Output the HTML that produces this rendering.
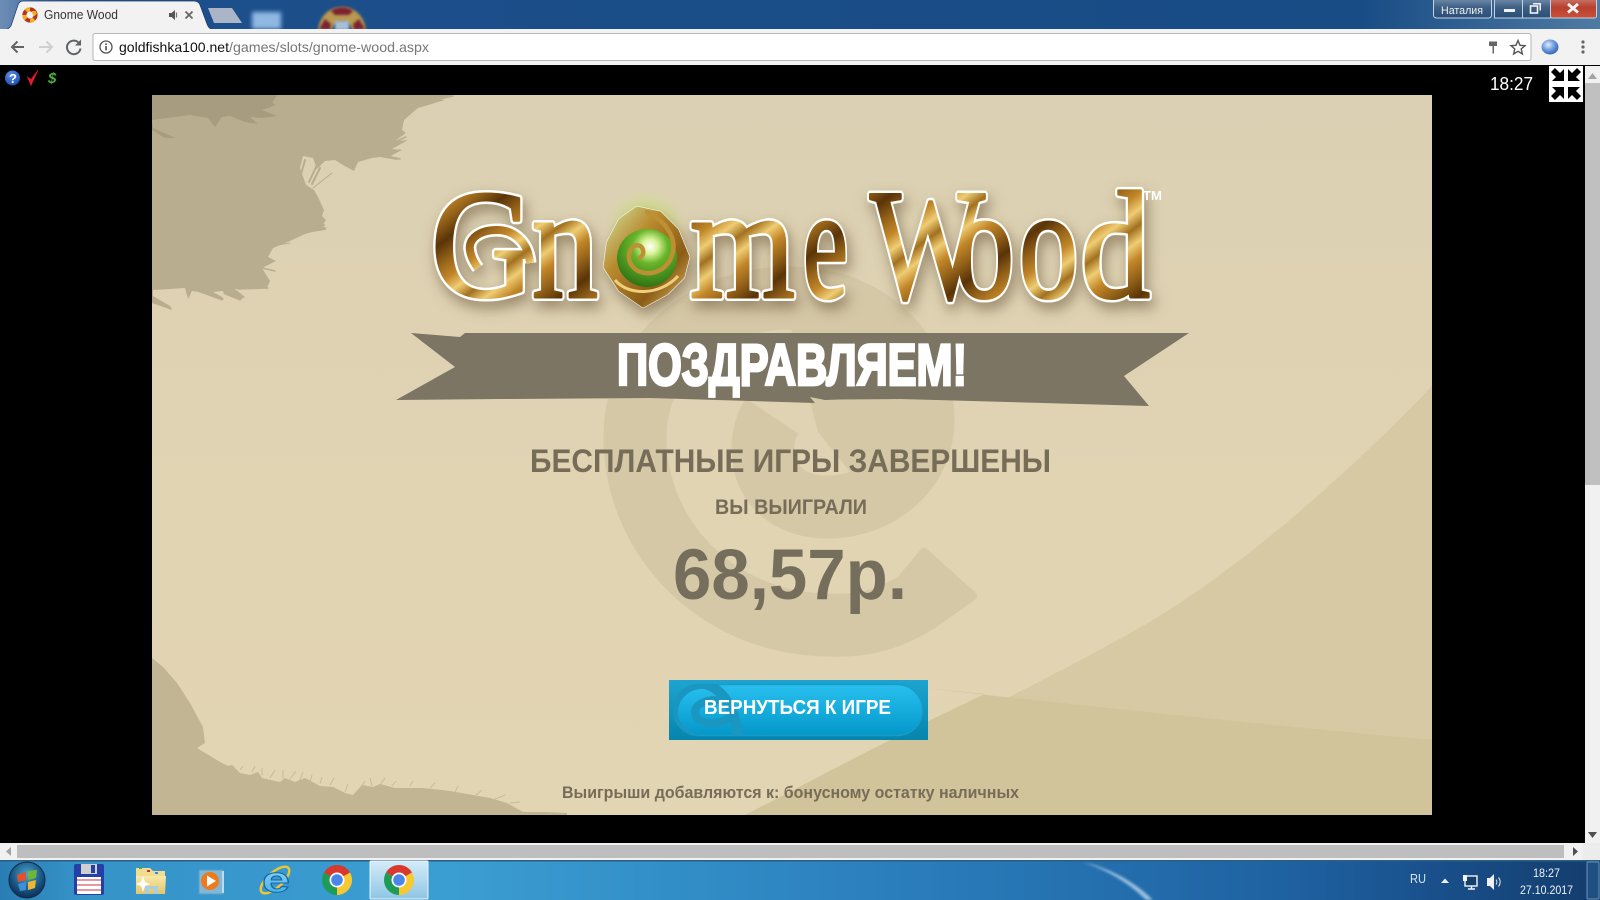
<!DOCTYPE html>
<html lang="ru">
<head>
<meta charset="utf-8">
<title>Gnome Wood</title>
<style>
html,body{margin:0;padding:0;background:#000;width:1600px;height:900px;overflow:hidden}
svg{display:block}
text{font-family:"Liberation Sans",Arial,sans-serif}
.serif{font-family:"Liberation Serif",serif;font-weight:400}
.b{font-weight:700}
</style>
</head>
<body>
<svg width="1600" height="900" viewBox="0 0 1600 900" xmlns="http://www.w3.org/2000/svg">
<defs>
<linearGradient id="panel" x1="0" y1="0" x2="0" y2="1"><stop offset="0" stop-color="#dbd0b3"/><stop offset=".6" stop-color="#e1d4b3"/><stop offset="1" stop-color="#e2d5b3"/></linearGradient>
<linearGradient id="title" x1="0" y1="0" x2="1" y2="0"><stop offset="0" stop-color="#6d8db5"/><stop offset=".04" stop-color="#2b5c96"/><stop offset=".12" stop-color="#1c4f8b"/><stop offset=".85" stop-color="#184c85"/><stop offset="1" stop-color="#4f7aa3"/></linearGradient>
<linearGradient id="task" x1="0" y1="0" x2="1" y2="0"><stop offset="0" stop-color="#2a7db5"/><stop offset=".05" stop-color="#3593c8"/><stop offset=".28" stop-color="#3b9ed2"/><stop offset=".55" stop-color="#2b7fbd"/><stop offset=".8" stop-color="#1f62a2"/><stop offset=".88" stop-color="#1a5390"/><stop offset="1" stop-color="#133c6c"/></linearGradient>
<linearGradient id="gold" gradientUnits="userSpaceOnUse" x1="0" y1="0" x2="34" y2="46" spreadMethod="reflect"><stop offset="0" stop-color="#5a3408"/><stop offset=".3" stop-color="#96641a"/><stop offset=".55" stop-color="#c18628"/><stop offset=".78" stop-color="#efcd74"/><stop offset="1" stop-color="#a2701f"/></linearGradient>
<radialGradient id="gem" cx=".55" cy=".3" r=".7"><stop offset="0" stop-color="#ffffff"/><stop offset=".18" stop-color="#d9f49a"/><stop offset=".42" stop-color="#69b52a"/><stop offset="1" stop-color="#2f7415"/></radialGradient>
<linearGradient id="gemo" x1="0" y1="0" x2="1" y2="1"><stop offset="0" stop-color="#cfe2a0"/><stop offset=".35" stop-color="#b98a2e"/><stop offset=".7" stop-color="#8a5c16"/><stop offset="1" stop-color="#e7c067"/></linearGradient>
<radialGradient id="glow" cx=".5" cy=".5" r=".5"><stop offset="0" stop-color="#bff05a" stop-opacity=".75"/><stop offset="1" stop-color="#bff05a" stop-opacity="0"/></radialGradient>
<linearGradient id="btn" x1="0" y1="0" x2="0" y2="1"><stop offset="0" stop-color="#29c0f0"/><stop offset="1" stop-color="#0398c9"/></linearGradient>
<linearGradient id="btno" x1="0" y1="0" x2="0" y2="1"><stop offset="0" stop-color="#1ea4d0"/><stop offset="1" stop-color="#0685ad"/></linearGradient>
<linearGradient id="btnmax" x1="0" y1="0" x2="0" y2="1"><stop offset="0" stop-color="#7b95b2"/><stop offset=".5" stop-color="#3e5f85"/><stop offset="1" stop-color="#2a4e77"/></linearGradient>
<linearGradient id="btnclose" x1="0" y1="0" x2="0" y2="1"><stop offset="0" stop-color="#c98074"/><stop offset=".5" stop-color="#b8402f"/><stop offset="1" stop-color="#c9503a"/></linearGradient>
<radialGradient id="orb" cx=".5" cy=".35" r=".65"><stop offset="0" stop-color="#4ba6d2"/><stop offset=".7" stop-color="#164f7c"/><stop offset="1" stop-color="#0c2f4e"/></radialGradient>
<linearGradient id="active" x1="0" y1="0" x2="0" y2="1"><stop offset="0" stop-color="#d4ecf8"/><stop offset="1" stop-color="#8ec6e4"/></linearGradient>
<linearGradient id="folder" x1="0" y1="0" x2="0" y2="1"><stop offset="0" stop-color="#f8e9a8"/><stop offset="1" stop-color="#e3c469"/></linearGradient>
<linearGradient id="iee" x1="0" y1="0" x2="0" y2="1"><stop offset="0" stop-color="#a5e2f8"/><stop offset="1" stop-color="#35a6e6"/></linearGradient>
<radialGradient id="globe" cx=".4" cy=".35" r=".7"><stop offset="0" stop-color="#e4eefa"/><stop offset=".5" stop-color="#6f9de0"/><stop offset="1" stop-color="#2f5eb0"/></radialGradient>
<radialGradient id="qm" cx=".4" cy=".3" r=".75"><stop offset="0" stop-color="#5d92e8"/><stop offset="1" stop-color="#1b48ad"/></radialGradient>
<filter id="shadow" x="-20%" y="-20%" width="140%" height="150%"><feDropShadow dx="3" dy="7" stdDeviation="7" flood-color="#5b4a26" flood-opacity=".55"/></filter>
<filter id="bl" x="-30%" y="-30%" width="160%" height="160%"><feGaussianBlur stdDeviation="1.4"/></filter>
<filter id="bl2" x="-30%" y="-30%" width="160%" height="160%"><feGaussianBlur stdDeviation="2.2"/></filter>
<clipPath id="panelclip"><rect x="152" y="95" width="1280" height="720"/></clipPath>
<clipPath id="pill"><rect x="673" y="684" width="250" height="52" rx="26"/></clipPath>
</defs>

<rect width="1600" height="900" fill="#000"/>

<!-- window title area -->
<rect width="1600" height="30" fill="url(#title)"/>
<polygon points="208,8 232,8 242,23 214,23" fill="#aab6c7"/>
<rect x="252" y="12" width="29" height="17" fill="#8fb8e2" filter="url(#bl2)"/>
<path d="M318 30C320 15 330 7 342 7C354 7 364 15 366 30H352C351 25 348 22 342 22C336 22 333 25 332 30Z" fill="#b89a50" filter="url(#bl)"/>
<path d="M331 11C336 6 348 6 353 11L349 15H335Z" fill="#7a2030" filter="url(#bl)"/>
<path d="M319 29L325 19L331 24L330 30Z M365 29L359 19L353 24L354 30Z" fill="#7a2030" filter="url(#bl)"/>
<rect x="335" y="21" width="14" height="9" fill="#a9bfd8" filter="url(#bl)"/>

<!-- tab -->
<path d="M5 30C9 29 11 27 12 23L18 5C19 2 21 1 23 1H194C197 1 199 2 200 5L207 24C208 27 210 29 213 30Z" fill="#f2f2f2" stroke="#1a3a66" stroke-width=".7"/>
<g fill="none" stroke-width="4">
<circle cx="30" cy="15" r="5.6" stroke="#b43324"/>
<path d="M26 11A5.6 5.6 0 0 1 30 9.4" stroke="#f0b020"/>
<path d="M34 19A5.6 5.6 0 0 1 30 20.6" stroke="#f0b020"/>
<path d="M26 19A5.6 5.6 0 0 1 24.4 15" stroke="#f0b020"/>
<path d="M35.6 15A5.6 5.6 0 0 1 34 11" stroke="#f0b020"/>
</g>
<text x="44" y="19" font-size="12.5" fill="#333" textLength="74" lengthAdjust="spacingAndGlyphs">Gnome Wood</text>
<path d="M169 13H171.5L175 10V20L171.5 17H169Z" fill="#555"/>
<path d="M176.5 12.5V17.5" stroke="#777" stroke-width="1.2"/>
<path d="M185.5 11.5L192.5 18.5M192.5 11.5L185.5 18.5" stroke="#666" stroke-width="1.8"/>

<!-- window buttons -->
<rect x="1433.5" y="-3" width="58" height="21" rx="3" fill="url(#btnmax)" stroke="#c4d2e2" stroke-width="1"/>
<text x="1441" y="14" font-size="11" fill="#f0f0f0" textLength="42" lengthAdjust="spacingAndGlyphs">Наталия</text>
<rect x="1494.5" y="-3" width="28" height="21" fill="url(#btnmax)" stroke="#c4d2e2" stroke-width="1"/>
<rect x="1522.5" y="-3" width="28" height="21" fill="url(#btnmax)" stroke="#c4d2e2" stroke-width="1"/>
<rect x="1550.5" y="-3" width="46" height="21" rx="2" fill="url(#btnclose)" stroke="#c4d2e2" stroke-width="1"/>
<rect x="1504" y="9" width="11" height="3" fill="#f2f2f2"/>
<rect x="1530.5" y="6" width="7" height="7" fill="none" stroke="#f2f2f2" stroke-width="1.6"/>
<path d="M1533 3.800H1540.200V10.500" fill="none" stroke="#f2f2f2" stroke-width="1.5"/>
<path d="M1568 4L1578 12.500M1578 4L1568 12.500" stroke="#f5f5f5" stroke-width="2.8"/>

<!-- toolbar -->
<rect y="29" width="1600" height="36" fill="#f2f2f2"/>
<path d="M12 47H24M17.5 41.5L12 47L17.5 52.5" fill="none" stroke="#5f6368" stroke-width="2"/>
<path d="M39 47H52M46.5 41.5L52 47L46.5 52.5" fill="none" stroke="#cfcfcf" stroke-width="2"/>
<path d="M79 43A6.8 6.8 0 1 0 80.5 48.5" fill="none" stroke="#5f6368" stroke-width="2"/>
<path d="M81 39.5V45.5H75Z" fill="#5f6368"/>
<rect x="93" y="33.5" width="1438" height="27" rx="2" fill="#fff" stroke="#b5b5b5"/>
<circle cx="106" cy="47" r="6" fill="none" stroke="#555" stroke-width="1.3"/>
<rect x="105.2" y="46" width="1.7" height="4.3" fill="#555"/>
<rect x="105.2" y="43.4" width="1.7" height="1.6" fill="#555"/>
<text x="119" y="52" font-size="14" fill="#111" textLength="110" lengthAdjust="spacingAndGlyphs">goldfishka100.net</text>
<text x="229" y="52" font-size="14" fill="#777" textLength="200" lengthAdjust="spacingAndGlyphs">/games/slots/gnome-wood.aspx</text>
<path d="M1489 41.500H1497V46H1494V53.500H1492.500V46H1489Z" fill="#666"/>
<path d="M1518 40.5L1520 45.3L1525 45.7L1521.2 49L1522.4 54L1518 51.3L1513.6 54L1514.8 49L1511 45.7L1516 45.3Z" fill="none" stroke="#555" stroke-width="1.4"/>
<ellipse cx="1550" cy="47" rx="8.5" ry="7.5" fill="url(#globe)"/>
<circle cx="1583" cy="42" r="1.6" fill="#666"/><circle cx="1583" cy="47" r="1.6" fill="#666"/><circle cx="1583" cy="52" r="1.6" fill="#666"/>

<!-- small icons -->
<circle cx="12.5" cy="78" r="7.5" fill="url(#qm)"/>
<text x="9" y="83" font-size="13" class="b" fill="#fff">?</text>
<path d="M27.5 77L31 85.500L38 70L31 79.500Z" fill="#e41b2d" stroke="#e41b2d" stroke-width=".6"/>
<text x="48" y="83" font-size="15" class="b" font-style="italic" fill="#4cb33a">$</text>
<text x="1490" y="90" font-size="18.5" fill="#fff" textLength="43" lengthAdjust="spacingAndGlyphs">18:27</text>
<rect x="1549" y="66" width="34" height="36" fill="#fff"/>
<g fill="#000">
<path d="M1564 69V81H1552L1556 77L1551 72L1555 68L1560 73Z"/>
<path d="M1568 69V81H1580L1576 77L1581 72L1577 68L1572 73Z"/>
<path d="M1564 99V87H1552L1556 91L1551 96L1555 100L1560 95Z"/>
<path d="M1568 99V87H1580L1576 91L1581 96L1577 100L1572 95Z"/>
</g>

<!-- panel -->
<g clip-path="url(#panelclip)">
<rect x="152" y="95" width="1280" height="720" fill="url(#panel)"/>
<g fill="#d5c8a7">
<path d="M929 594C900 615 870 627 830 625C720 625 635 540 635 437C635 360 700 298 790 298C870 298 923 355 923 420C923 470 880 507 827 507C785 507 763 480 763 450C763 435 766 425 772 416" fill="none" stroke="#d5c8a7" stroke-width="63" stroke-linejoin="round"/>
<path d="M924 551L974 596L932 626L888 594Z" stroke="#d5c8a7" stroke-width="7" stroke-linejoin="round"/>
<path d="M818 432L790 325H895V480L850 472Z"/>
</g>
<path d="M1432 386C1360 462 1245 567 1141 627C1038 685 887 760 745 815H1432Z" fill="#d6c9a3"/>
<path d="M925 688C1100 708 1300 728 1432 740V815H745C810 782 870 748 985 694Z" fill="#d1c39a"/>

<!-- bushes -->
<path d="M152 95H453L436 99L445 100L418 108L404 120L402 130L406 133L395 141L408 140L392 149L402 150L390 156L400 158L397 160L380 157L372 158L358 162L354 171L343 165L335 160L325 161L317 169L313 158L303 156L300 168L306 185L314 190L318 197L324 210L322 216L326 220L322 226L327 228L305 234L290 241L273 248L268 257L276 261L262 268L270 281L267 288L248 288L235 289L245 297L240 300L222 291L213 292L224 298L205 293L192 291L188 299L185 288L170 289L153 290V296L170 306L172 310L152 303Z" fill="#b9ad8f"/>
<g stroke="#b9ad8f" fill="none" stroke-linecap="round">
<path d="M313 188L332 173" stroke-width="1"/>
<path d="M305 160L300 178M318 163L309 182M320 168L312 184" stroke-width="2"/>
<path d="M318 226L324 221M296 236L324 225M305 232L325 229" stroke-width="2"/>
<path d="M272 246L290 243" stroke-width="1"/>
<path d="M238 289L268 288M262 268L275 271" stroke-width="1.5"/>
<path d="M380 156L400 159M392 143L406 137M400 150L391 155" stroke-width="1.5"/>
<path d="M430 101L453 96" stroke-width="1.5"/>
<path d="M200 291L222 299M225 293L240 299" stroke-width="3"/>
</g>
<path d="M152 95H277L272 103L276 105L262 110L277 116L262 118L250 117L258 124L245 122L230 116L222 117L215 127L208 118L190 115L175 117L152 120L153 128L175 138L165 138L152 130Z" fill="#a79c7f"/>
<path d="M152 658L163 667L177 683L190 703L203 727L205 743L197 748L220 762L228 766L232 765L240 773L250 775L258 772L262 778L280 782L285 778L295 782L305 778L320 786L333 787L345 793L353 795L362 785L373 787L380 784L395 788L423 788L450 791L473 795L490 798L507 803L523 812L545 812L567 813V815H152Z" fill="#c1b594"/>
<g stroke="#c1b594" stroke-width="1" fill="none" opacity=".8">
<path d="M232 766V768M240 770L243 766M252 772L255 766M262 775L262 768M270 778L275 770M283 779L283 770M290 779L296 771M300 780L303 772M310 782L312 775M320 784L322 777M330 785L334 778M345 792L348 784M360 790L365 781M372 786L370 778M380 785L385 778M392 786L396 781M410 786L413 781M430 788L435 783M455 792L458 786M476 795L482 790M495 799L505 795M510 803L520 802"/>
</g>
</g>

<!-- logo -->
<ellipse cx="646" cy="226" rx="40" ry="36" fill="url(#glow)"/>
<g filter="url(#shadow)" stroke="#fff" stroke-width="8" stroke-linejoin="round" fill="#fff">
<text class="serif" x="431" y="296" font-size="154" textLength="104" lengthAdjust="spacingAndGlyphs">G</text>
<text class="serif" x="532" y="297" font-size="159" textLength="66" lengthAdjust="spacingAndGlyphs">n</text>
<text class="serif" x="690" y="297" font-size="159" textLength="105" lengthAdjust="spacingAndGlyphs">m</text>
<text class="serif" x="803" y="297" font-size="159" textLength="45" lengthAdjust="spacingAndGlyphs">e</text>
<text class="serif" x="870" y="298" font-size="158" textLength="115" lengthAdjust="spacingAndGlyphs">W</text>
<text class="serif" x="955" y="297" font-size="159" textLength="59" lengthAdjust="spacingAndGlyphs">o</text>
<text class="serif" x="1019" y="297" font-size="159" textLength="59" lengthAdjust="spacingAndGlyphs">o</text>
<text class="serif" x="1081" y="297" font-size="153" textLength="69" lengthAdjust="spacingAndGlyphs">d</text>
<path d="M530 263C528 240 512 230 497 230C478 230 468 240 470 250C471 258 475 264 478 268" fill="none" stroke-width="13"/>
<path d="M637 208L660 213L677 230L688 257L683 277L667 293L643 306L620 290L605 267L608 243L620 220Z" stroke-width="4"/>
</g>
<g stroke="url(#gold)" stroke-width="3" stroke-linejoin="round" fill="url(#gold)">
<text class="serif" x="431" y="296" font-size="154" textLength="104" lengthAdjust="spacingAndGlyphs">G</text>
<text class="serif" x="532" y="297" font-size="159" textLength="66" lengthAdjust="spacingAndGlyphs">n</text>
<text class="serif" x="690" y="297" font-size="159" textLength="105" lengthAdjust="spacingAndGlyphs">m</text>
<text class="serif" x="803" y="297" font-size="159" textLength="45" lengthAdjust="spacingAndGlyphs">e</text>
<text class="serif" x="870" y="298" font-size="158" textLength="115" lengthAdjust="spacingAndGlyphs">W</text>
<text class="serif" x="955" y="297" font-size="159" textLength="59" lengthAdjust="spacingAndGlyphs">o</text>
<text class="serif" x="1019" y="297" font-size="159" textLength="59" lengthAdjust="spacingAndGlyphs">o</text>
<text class="serif" x="1081" y="297" font-size="153" textLength="69" lengthAdjust="spacingAndGlyphs">d</text>
<path d="M530 263C528 240 512 230 497 230C478 230 468 240 470 250C471 258 475 264 478 268" fill="none" stroke-width="8"/>
</g>
<path d="M637 208L660 213L677 230L688 257L683 277L667 293L643 306L620 290L605 267L608 243L620 220Z" fill="url(#gemo)" stroke="url(#gemo)" stroke-width="3" stroke-linejoin="round"/>
<ellipse cx="647" cy="258" rx="30" ry="29" fill="url(#gem)"/>
<path d="M647 212C664 220 676 236 673 251C670 268 656 274 646 273C634 272 626 262 630 251C633 244 641 243 643 250C644 254 642 256 640 258" fill="none" stroke="#bd9034" stroke-width="4.5" stroke-linecap="round"/>
<path d="M615 280C628 296 660 296 678 276" fill="none" stroke="#f0cf7a" stroke-width="3"/>
<text x="1143" y="200" font-size="13" class="b" fill="#fff" textLength="19" lengthAdjust="spacingAndGlyphs">TM</text>

<!-- ribbon -->
<path d="M411 333L460 337L465 333L1189 333L1124 376L1149 406L900 399L840 399.500L825 400L810 397L815 403L650 398L500 399L396 400L455 367Z" fill="#7c7564"/>
<text x="617" y="385" font-size="58" class="b" fill="#fff" stroke="#fff" stroke-width="2.8" stroke-linejoin="miter" textLength="350" lengthAdjust="spacingAndGlyphs">ПОЗДРАВЛЯЕМ!</text>

<!-- texts -->
<text x="530" y="472" font-size="32" class="b" fill="#766c58" textLength="521" lengthAdjust="spacingAndGlyphs">БЕСПЛАТНЫЕ ИГРЫ ЗАВЕРШЕНЫ</text>
<text x="715" y="514" font-size="21" class="b" fill="#766c58" textLength="152" lengthAdjust="spacingAndGlyphs">ВЫ ВЫИГРАЛИ</text>
<text x="673" y="599" font-size="71" class="b" fill="#766e5c" textLength="234" lengthAdjust="spacingAndGlyphs">68,57р.</text>

<!-- button -->
<rect x="669" y="680" width="259" height="60" fill="url(#btno)"/>
<rect x="673.5" y="684.5" width="249" height="51" rx="25.5" fill="url(#btn)" stroke="#1b9cc6" stroke-width="1.5"/>
<g clip-path="url(#pill)" fill="none" stroke="#1a97c0">
<path d="M738 738C735 700 715 684 702 684C685 684 673 698 673 712C673 728 690 742 710 742" stroke-width="10"/>
<path d="M722 701C708 698 695 704 695 712C695 722 712 728 730 718" stroke-width="8"/>
</g>
<text x="704" y="714" font-size="20" class="b" fill="#fff" textLength="187" lengthAdjust="spacingAndGlyphs">ВЕРНУТЬСЯ К ИГРЕ</text>

<text x="562" y="798" font-size="16.5" class="b" fill="#776c57" textLength="457" lengthAdjust="spacingAndGlyphs">Выигрыши добавляются к: бонусному остатку наличных</text>

<!-- scrollbars -->
<rect x="1585" y="66" width="15" height="777" fill="#f1f1f1"/>
<path d="M1588 79L1592.5 73L1597 79Z" fill="#a3a3a3"/>
<rect x="1585" y="83" width="15" height="402" fill="#c0c0c0"/>
<path d="M1588 832H1597L1592.5 838Z" fill="#505050"/>
<rect y="843" width="1600" height="17" fill="#f1f1f1"/>
<rect x="17" y="845" width="1547" height="13" fill="#bebebe"/>
<path d="M11 847V856L6 851.5Z" fill="#a3a3a3"/>
<path d="M1573 847V856L1578 851.5Z" fill="#505050"/>
<rect x="1583" y="843" width="17" height="17" fill="#ececec"/>

<!-- taskbar -->
<rect y="860" width="1600" height="40" fill="url(#task)"/>
<rect y="860" width="1600" height="1.5" fill="#2a5f82"/>
<path d="M1082 862C1110 868 1135 882 1153 900H1146C1130 884 1108 870 1082 862Z" fill="#bfdcf0" opacity=".75" filter="url(#bl)"/>
<rect x="1587" y="862" width="12" height="37" rx="1" fill="#1d4f80" stroke="#6f93b3"/>

<!-- start orb -->
<circle cx="27" cy="880" r="18" fill="url(#orb)" stroke="#0f2c46" stroke-width="1"/>
<path d="M17 875L26 872L26 880L18 882Z" fill="#e5502c"/>
<path d="M28 871L37 870L36 878L28 880Z" fill="#6fb53a"/>
<path d="M18 884L26 882L26 890L20 891Z" fill="#3d8fd8"/>
<path d="M28 882L36 880L35 888L28 890Z" fill="#f0b72c"/>
<!-- floppy -->
<rect x="74" y="864" width="30" height="31" rx="2" fill="#2440a8"/>
<rect x="81" y="864" width="16" height="10" fill="#cfcfcf"/>
<rect x="91" y="865" width="4" height="8" fill="#2440a8"/>
<rect x="77" y="877" width="24" height="17" fill="#fff"/>
<path d="M77 880H101M77 885H101M77 890H101" stroke="#c8304a" stroke-width="1"/>
<!-- folder -->
<path d="M136 868H150L153 871H165V893H136Z" fill="#f2dc92"/>
<rect x="139" y="867" width="3" height="2" fill="#3cb043"/><rect x="147" y="870" width="3" height="2" fill="#c0392b"/><rect x="155" y="872" width="3" height="2" fill="#2d8fd5"/>
<path d="M136 876H166L165 894H136Z" fill="url(#folder)"/>
<path d="M145 894V886H158V894H154V889H149V894Z" fill="#a8cfe0"/>
<path d="M143 876L145 882L150 884L145 886L143 892L141 886L136 884L141 882Z" fill="#fff"/>
<!-- media -->
<rect x="199" y="870" width="24" height="24" fill="#7fb8d9" stroke="#5d9cc2"/>
<rect x="222" y="871" width="2" height="22" fill="#bcdcec"/>
<circle cx="210" cy="881" r="9" fill="#ee7a1c"/>
<path d="M207 875.5L216 881L207 886.5Z" fill="#fff"/>
<!-- IE -->
<ellipse cx="275" cy="880" rx="18" ry="7.5" fill="none" stroke="#f1c52f" stroke-width="2.4" transform="rotate(-42 275 880)"/>
<text x="262" y="892" font-size="36" class="b" fill="url(#iee)" stroke="#1563a8" stroke-width="1" textLength="28" lengthAdjust="spacingAndGlyphs">e</text>
<!-- chrome 1 -->
<g transform="translate(337 880)">
<path d="M-13 -7.5A15 15 0 0 1 13 -7.5L0 0Z" fill="#d8392c"/>
<path d="M13 -7.5A15 15 0 0 1 0 15L0 0Z" fill="#f5c92f"/>
<path d="M0 15A15 15 0 0 1 -13 -7.5L0 0Z" fill="#1e9c57"/>
<circle r="7.5" fill="#fff"/><circle r="5.8" fill="#4a86e8"/>
</g>
<!-- active -->
<rect x="370" y="861" width="58" height="38" rx="1" fill="url(#active)" stroke="#eef7fc"/>
<g transform="translate(399 880)">
<path d="M-13 -7.5A15 15 0 0 1 13 -7.5L0 0Z" fill="#d8392c"/>
<path d="M13 -7.5A15 15 0 0 1 0 15L0 0Z" fill="#f5c92f"/>
<path d="M0 15A15 15 0 0 1 -13 -7.5L0 0Z" fill="#1e9c57"/>
<circle r="7.5" fill="#fff"/><circle r="5.8" fill="#4a86e8"/>
</g>

<!-- tray -->
<text x="1410" y="883" font-size="12.5" fill="#d9e4ee" textLength="16" lengthAdjust="spacingAndGlyphs">RU</text>
<path d="M1441 883L1445 878.5L1449 883Z" fill="#f4f4f4"/>
<rect x="1465" y="876" width="12" height="10" fill="#15406e" stroke="#f4f4f4" stroke-width="1.4"/>
<path d="M1468 889H1475M1471.5 886V889" stroke="#f4f4f4" stroke-width="1.4"/>
<rect x="1463" y="875" width="4" height="6" fill="#f4f4f4"/>
<path d="M1487 878H1490L1494 874V890L1490 886H1487Z" fill="#f0f0f0"/>
<path d="M1496 879.5A4 4 0 0 1 1496 884.5M1498.5 877.5A7 7 0 0 1 1498.5 886.5" fill="none" stroke="#e6e6e6" stroke-width="1"/>
<text x="1533" y="877" font-size="12" fill="#eef3f8" textLength="27" lengthAdjust="spacingAndGlyphs">18:27</text>
<text x="1520" y="894" font-size="12" fill="#eef3f8" textLength="53" lengthAdjust="spacingAndGlyphs">27.10.2017</text>
</svg>
</body>
</html>
